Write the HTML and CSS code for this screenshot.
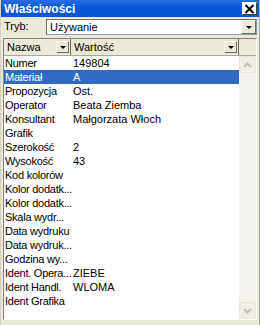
FILE: index.html
```html
<!DOCTYPE html>
<html lang="pl">
<head>
    <meta charset="UTF-8">
    <title>Właściwości</title>
    <link rel="stylesheet" href="styles.css">
</head>
<body>

<div class="window">
  <div class="titlebar">
    <span class="title">Właściwości</span>
    <span class="close">
      <svg width="11" height="10" viewBox="0 0 11 10"><path d="M1.5 1 L9.5 9 M9.5 1 L1.5 9" stroke="#000" stroke-width="2"/></svg>
    </span>
  </div>

  <div class="mode">
    <span class="mode-label">Tryb:</span>
    <div class="combo">
      <span class="combo-text">Używanie</span>
      <span class="drop"><span class="tri"></span></span>
    </div>
  </div>

  <div class="grid">
    <div class="header">
      <div class="hcell name">Nazwa<span class="hbtn"><span class="tri"></span></span></div>
      <div class="hcell value">Wartość<span class="hbtn"><span class="tri"></span></span></div>
      <div class="hcell filler"></div>
    </div>
    <div class="body">
      <div class="rows" id="rows"></div>
      <div class="scroll">
        <span class="sbtn"><svg width="9" height="6" viewBox="0 0 9 6"><path d="M1 5 L4.5 1.5 L8 5" fill="none" stroke="#c3c1b6" stroke-width="2"/></svg></span>
        <span class="track"></span>
        <span class="sbtn"><svg width="9" height="6" viewBox="0 0 9 6"><path d="M1 1 L4.5 4.5 L8 1" fill="none" stroke="#c3c1b6" stroke-width="2"/></svg></span>
      </div>
    </div>
  </div>
</div>

<script>
    const props = [
        ['Numer', '149804'],
        ['Materiał', 'A'],
        ['Propozycja', 'Ost.'],
        ['Operator', 'Beata Ziemba'],
        ['Konsultant', 'Małgorzata Włoch'],
        ['Grafik', ''],
        ['Szerokość', '2'],
        ['Wysokość', '43'],
        ['Kod kolorów', ''],
        ['Kolor dodatk...', ''],
        ['Kolor dodatk...', ''],
        ['Skala wydr...', ''],
        ['Data wydruku', ''],
        ['Data wydruk...', ''],
        ['Godzina wy...', ''],
        ['Ident. Opera...', 'ZIEBE'],
        ['Ident Handl.', 'WLOMA'],
        ['Ident Grafika', '']
    ];

    const rowsDiv = document.getElementById('rows');
    props.forEach((p, i) => {
        const row = document.createElement('div');
        row.classList.add('row');
        if (i === 1) row.classList.add('selected');
        row.innerHTML = `<span class="cname">${p[0]}</span><span class="cvalue">${p[1]}</span>`;
        rowsDiv.appendChild(row);
    });
</script>

</body>
</html>
```

FILE: styles.css
```css
body {
    margin: 0;
    font-family: "Liberation Sans", Arial, sans-serif;
    font-size: 11px;
    color: #000;
}
.window {
    width: 260px;
    height: 325px;
    box-sizing: border-box;
    background: #ece9d8;
    border-left: 1px solid #d4d0c8;
    border-right: 1px solid #aca899;
    display: flex;
    flex-direction: column;
}
.titlebar {
    height: 17px;
    background: linear-gradient(#2a6ee6, #0a58d8 40%, #0a55d2);
    display: flex;
    align-items: center;
    justify-content: space-between;
    padding: 0 2px 0 3px;
}
.title {
    color: #fff;
    font-weight: bold;
    font-size: 12px;
}
.close {
    width: 15px;
    height: 13px;
    background: #fff;
    border: 1px solid #fff;
    border-right-color: #404040;
    border-bottom-color: #404040;
    box-sizing: border-box;
    display: flex;
    align-items: center;
    justify-content: center;
}
.mode {
    display: flex;
    align-items: flex-start;
    padding: 2px 2px 0 3px;
    height: 18px;
}
.mode-label {
    width: 42px;
    line-height: 14px;
}
.combo {
    flex: 1;
    height: 16px;
    background: #fff;
    border: 1px solid #7f9db9;
    border-top-color: #716f64;
    border-left-color: #716f64;
    box-sizing: border-box;
    display: flex;
    align-items: center;
    justify-content: space-between;
}
.combo-text {
    padding-left: 3px;
}
.drop, .hbtn {
    width: 13px;
    height: 12px;
    background: #ece9d8;
    border: 1px solid #fff;
    border-right-color: #716f64;
    border-bottom-color: #716f64;
    box-sizing: border-box;
    display: flex;
    align-items: center;
    justify-content: center;
}
.drop {
    width: 15px;
    height: 14px;
}
.tri {
    width: 0;
    height: 0;
    border-left: 3px solid transparent;
    border-right: 3px solid transparent;
    border-top: 3px solid #000;
}
.grid {
    flex: 1;
    margin: 1px 2px 5px 2px;
    border: 1px solid #808080;
    border-right-color: #fff;
    border-bottom-color: #fff;
    display: flex;
    flex-direction: column;
    background: #fff;
}
.header {
    display: flex;
    height: 16px;
    background: #ece9d8;
    border-bottom: 1px solid #aca899;
}
.hcell {
    display: flex;
    align-items: center;
    justify-content: space-between;
    padding: 0 1px 0 3px;
    border-right: 1px solid #716f64;
    box-sizing: border-box;
}
.name {
    width: 67px;
}
.value {
    width: 168px;
}
.filler {
    flex: 1;
    border-right: none;
}
.body {
    flex: 1;
    display: flex;
}
.rows {
    flex: 1;
}
.row {
    display: flex;
    height: 14px;
    line-height: 14px;
}
.row.selected {
    background: #316ac5;
    color: #fff;
}
.cname {
    width: 67px;
    flex-shrink: 0;
    padding-left: 1px;
    box-sizing: border-box;
    white-space: nowrap;
    letter-spacing: -0.25px;
}
.cvalue {
    padding-left: 2px;
}
.scroll {
    width: 17px;
    background: #f4f3ee;
    display: flex;
    flex-direction: column;
}
.sbtn {
    height: 17px;
    background: #f1efe5;
    border: 1px solid #eae8de;
    box-sizing: border-box;
    display: flex;
    align-items: center;
    justify-content: center;
}
.track {
    flex: 1;
}
```
